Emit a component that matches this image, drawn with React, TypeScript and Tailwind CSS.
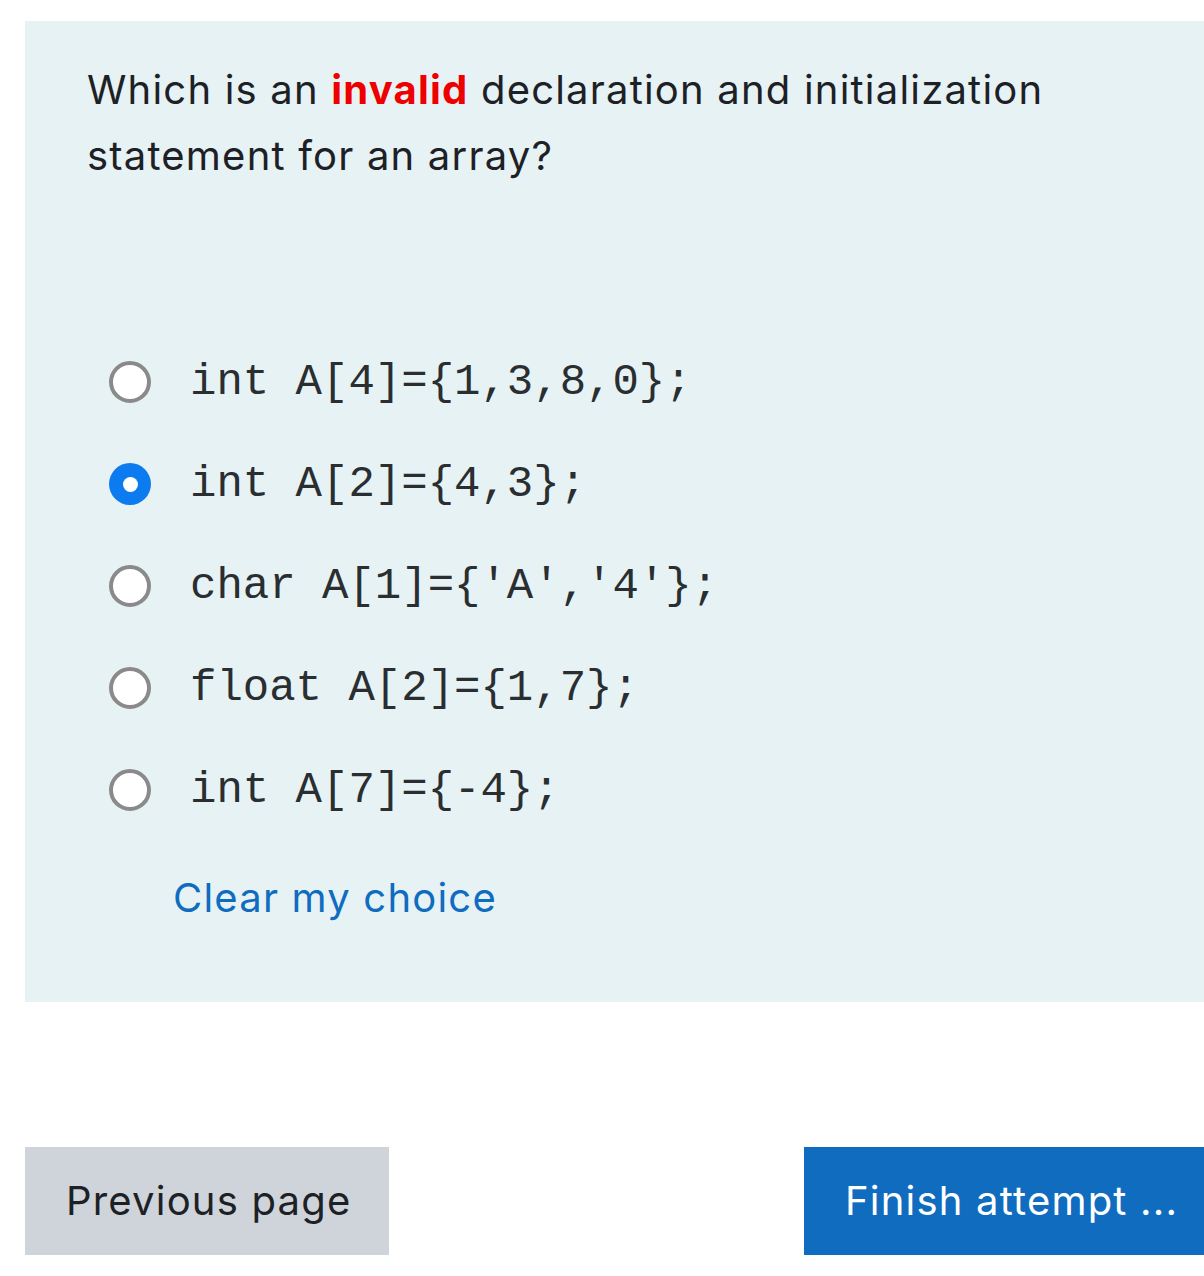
const options = [
  { id: 'a', code: 'int A[4]={1,3,8,0};' },
  { id: 'b', code: 'int A[2]={4,3};' },
  { id: 'c', code: "char A[1]={'A','4'};" },
  { id: 'd', code: 'float A[2]={1,7};' },
  { id: 'e', code: 'int A[7]={-4};' },
]

function Radio({ checked }: { checked: boolean }) {
  return checked ? (
    <span className="w-[42px] h-[42px] rounded-full bg-[#0c7bf0] flex items-center justify-center shrink-0">
      <span className="w-[15px] h-[15px] rounded-full bg-white" />
    </span>
  ) : (
    <span className="w-[42px] h-[42px] rounded-full bg-white border-[4px] border-[#8a8a8a] shrink-0" />
  )
}

export default function App() {
  const selected = 'b'

  return (
    <div className="w-[1204px] h-[1276px] bg-white overflow-hidden font-['Inter',sans-serif] text-[#1d2125] tracking-[1.2px]">
      {/* pregunta */}
      <div className="ml-[25px] mt-[21px] bg-[#e7f2f5] pl-[62px] pt-[36px] pb-[71px]">
        <p className="text-[40px] leading-[66px]">
          Which is an <span className="font-bold text-[#ee0000]">invalid</span> declaration and initialization
          <br />
          statement for an array?
        </p>

        <div className="mt-[142px]">
          {options.map(o => (
            <div key={o.id} className="h-[102px] flex items-center pl-[22px]">
              <Radio checked={o.id === selected} />
              <span className="ml-[39px] font-['Liberation_Mono',monospace] text-[44px] leading-none tracking-normal text-[#2a2e31]">
                {o.code}
              </span>
            </div>
          ))}
        </div>

        <div className="mt-[24px] pl-[86px] text-[40px] leading-[66px] text-[#0f6cbf]">Clear my choice</div>
      </div>

      {/* botones */}
      <div className="mt-[145px] flex justify-between pl-[25px]">
        <button className="h-[108px] w-[364px] bg-[#ced4da] text-[40px] text-left pl-[41px] text-[#1d2125]">
          Previous page
        </button>
        <button className="h-[108px] w-[400px] bg-[#0f6cbf] text-[40px] text-left pl-[41px] text-white">
          Finish attempt ...
        </button>
      </div>
    </div>
  )
}
